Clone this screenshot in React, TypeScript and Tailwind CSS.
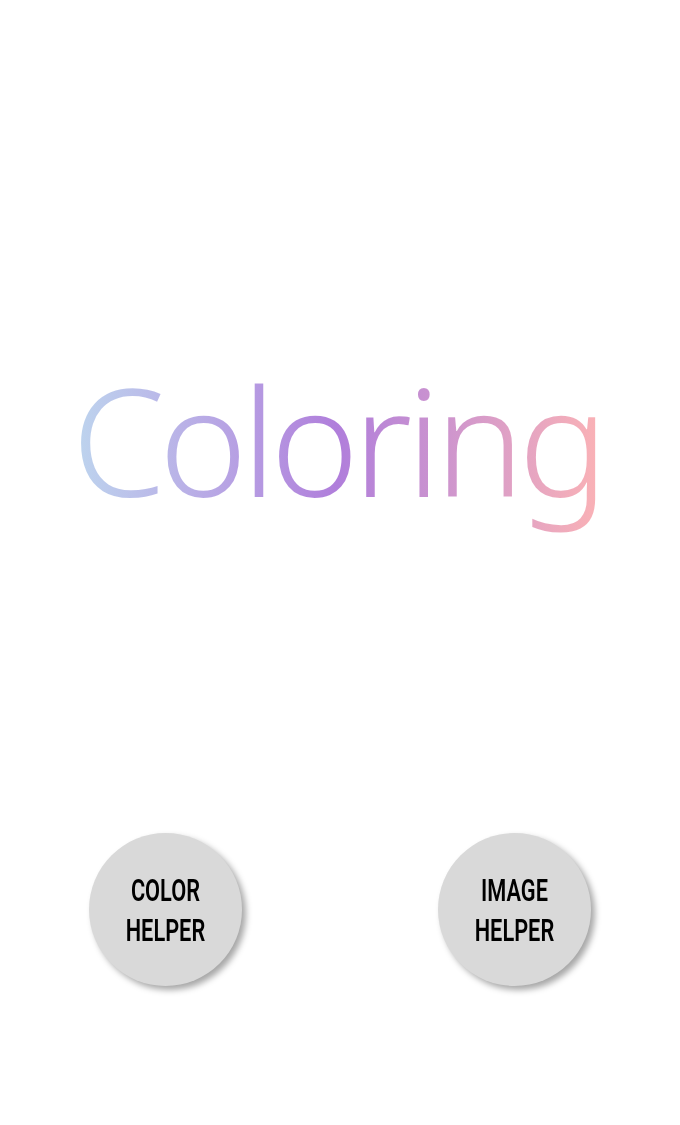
export default function App() {
  const buttons = [
    ["COLOR", "HELPER"],
    ["IMAGE", "HELPER"],
  ];

  return (
    <div className="flex h-[1125px] w-full flex-col bg-white">
      {/* Title */}
      <div className="flex h-[600px] items-start justify-center pr-[6px] pt-[364px]">
        <span
          className="inline-block bg-gradient-to-r from-[#bdd5ee] via-[#b07edb] to-[#fbb2b5] bg-clip-text pb-[40px] text-[150px] font-[350] leading-none tracking-[-6px] text-transparent"
          style={{ fontFamily: '"Noto Sans", sans-serif' }}
        >
          Coloring
        </span>
      </div>

      {/* Helpers */}
      <div className="mt-[233px] flex justify-between px-[89px]">
        {buttons.map(([a, b]) => (
          <button
            key={a}
            className="flex h-[153px] w-[153px] items-center justify-center rounded-full bg-[#d9d9d9] shadow-[4px_4px_6px_rgba(0,0,0,0.35)]"
          >
            <span
              className="inline-block scale-x-[0.68] text-center text-[32px] font-semibold leading-[40px] text-black"
              style={{ fontFamily: "Roboto, sans-serif" }}
            >
              {a}
              <br />
              {b}
            </span>
          </button>
        ))}
      </div>
    </div>
  );
}
